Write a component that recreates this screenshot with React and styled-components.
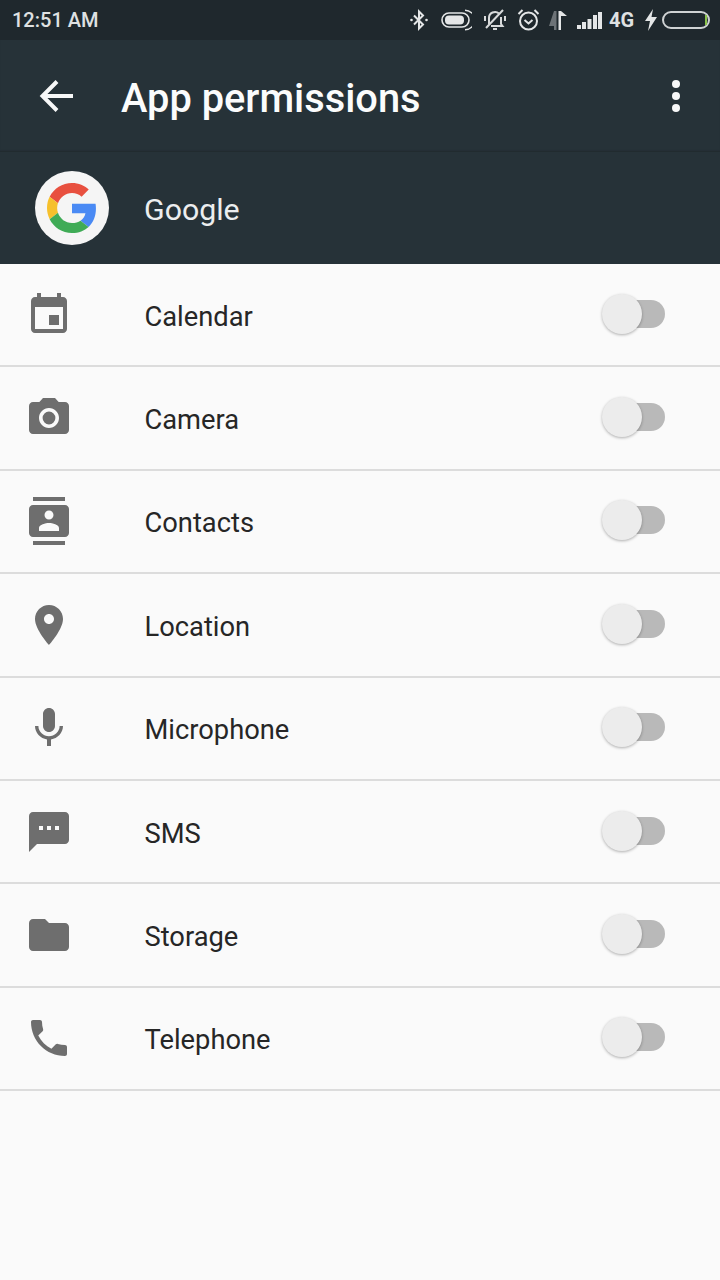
import styled, { createGlobalStyle } from "styled-components";

const GlobalStyle = createGlobalStyle`
  html, body {
    margin: 0;
    padding: 0;
    background: #fafafa;
  }
  body {
    font-family: Roboto, "Liberation Sans", sans-serif;
  }
`;

const permissions = [
  {
    name: "Calendar",
    icon: "M17 12h-5v5h5v-5zM16 1v2H8V1H6v2H5c-1.11 0-1.99.9-1.99 2L3 19c0 1.1.89 2 2 2h14c1.1 0 2-.9 2-2V5c0-1.1-.9-2-2-2h-1V1h-2zm3 18H5V8h14v11z",
  },
  {
    name: "Camera",
    icon: "M12 8.8a3.2 3.2 0 1 0 0 6.4 3.2 3.2 0 0 0 0-6.4zM9 2L7.17 4H4c-1.1 0-2 .9-2 2v12c0 1.1.9 2 2 2h16c1.1 0 2-.9 2-2V6c0-1.1-.9-2-2-2h-3.17L15 2H9zm3 15c-2.76 0-5-2.24-5-5s2.24-5 5-5 5 2.24 5 5-2.24 5-5 5z",
  },
  {
    name: "Contacts",
    icon: "M20 0H4v2h16V0zM4 24h16v-2H4v2zM20 4H4c-1.1 0-2 .9-2 2v12c0 1.1.9 2 2 2h16c1.1 0 2-.9 2-2V6c0-1.1-.9-2-2-2zm-8 2.75c1.24 0 2.25 1.01 2.25 2.25s-1.01 2.25-2.25 2.25S9.75 10.24 9.75 9 10.76 6.75 12 6.75zM17 17H7v-1.5c0-1.67 3.33-2.5 5-2.5s5 .83 5 2.5V17z",
  },
  {
    name: "Location",
    icon: "M12 2C8.13 2 5 5.13 5 9c0 5.25 7 13 7 13s7-7.75 7-13c0-3.87-3.13-7-7-7zm0 9.5c-1.38 0-2.5-1.12-2.5-2.5s1.12-2.5 2.5-2.5 2.5 1.12 2.5 2.5-1.12 2.5-2.5 2.5z",
  },
  {
    name: "Microphone",
    icon: "M12 14c1.66 0 2.99-1.34 2.99-3L15 5c0-1.66-1.34-3-3-3S9 3.34 9 5v6c0 1.66 1.34 3 3 3zm5.3-3c0 3-2.54 5.1-5.3 5.1S6.7 14 6.7 11H5c0 3.41 2.72 6.23 6 6.72V21h2v-3.28c3.28-.48 6-3.3 6-6.72h-1.7z",
  },
  {
    name: "SMS",
    icon: "M20 2H4c-1.1 0-1.99.9-1.99 2L2 22l4-4h14c1.1 0 2-.9 2-2V4c0-1.1-.9-2-2-2zM9 11H7V9h2v2zm4 0h-2V9h2v2zm4 0h-2V9h2v2z",
  },
  {
    name: "Storage",
    icon: "M10 4H4c-1.1 0-1.99.9-1.99 2L2 18c0 1.1.9 2 2 2h16c1.1 0 2-.9 2-2V8c0-1.1-.9-2-2-2h-8l-2-2z",
  },
  {
    name: "Telephone",
    icon: "M6.62 10.79c1.44 2.83 3.76 5.14 6.59 6.59l2.2-2.2c.27-.27.67-.36 1.02-.24 1.12.37 2.33.57 3.57.57.55 0 1 .45 1 1V20c0 .55-.45 1-1 1-9.39 0-17-7.61-17-17 0-.55.45-1 1-1h3.5c.55 0 1 .45 1 1 0 1.25.2 2.45.57 3.57.11.35.03.74-.25 1.02l-2.2 2.2z",
  },
];

const Page = styled.div`
  width: 720px;
  height: 1280px;
  overflow: hidden;
  background: #fafafa;
`;

const StatusBar = styled.div`
  height: 40px;
  padding: 0 10px 0 12px;
  box-sizing: border-box;
  display: flex;
  align-items: center;
  background: #1f282d;
  color: #dfe1e2;
`;

const Clock = styled.span`
  font-size: 20px;
  font-weight: 500;
  flex: 1;
`;

const StatusIcons = styled.div`
  display: flex;
  align-items: center;
`;

const Slot = styled.div`
  width: ${(p) => p.$w}px;
  display: flex;
  align-items: center;
`;

const NetworkLabel = styled.span`
  font-size: 20px;
  font-weight: 700;
`;

const Toolbar = styled.div`
  height: 112px;
  display: flex;
  align-items: center;
  padding: 0 40px 0 32px;
  box-sizing: border-box;
  background: #263238;
  box-shadow: inset 0 -2px 2px -1px #20292e;
`;

const Title = styled.h1`
  flex: 1;
  margin: 0 0 0 41px;
  padding-top: 4px;
  font-size: 39.8px;
  font-weight: 500;
  color: #fbfcfc;
`;

const AppBar = styled.div`
  height: 112px;
  display: flex;
  align-items: center;
  gap: 35px;
  padding: 0 0 0 35px;
  box-sizing: border-box;
  background: #263238;
`;

const LogoCircle = styled.div`
  width: 74px;
  height: 74px;
  border-radius: 50%;
  background: #f5f5f5;
  display: flex;
  align-items: center;
  justify-content: center;
`;

const AppName = styled.span`
  padding-top: 2px;
  font-size: 30.3px;
  color: #eceeef;
`;

const List = styled.div`
  display: grid;
  grid-auto-rows: 103.4px;
`;

const Row = styled.div`
  display: flex;
  align-items: center;
  padding: 0 55px 0 24.5px;
  box-sizing: border-box;
  border-bottom: 2px solid #dcdcdc;
`;

const RowIcon = styled.svg`
  width: 48px;
  height: 48px;
  fill: #6e6e6e;
  flex-shrink: 0;
`;

const Label = styled.span`
  flex: 1;
  margin-left: 72px;
  padding-top: 4px;
  font-size: 27.3px;
  color: #262626;
`;

const Toggle = styled.div`
  position: relative;
  width: 58px;
  height: 28px;
  margin-bottom: 2px;
  border-radius: 14px;
  background: #b9b9b9;
`;

const Thumb = styled.div`
  position: absolute;
  left: -5px;
  top: -6px;
  width: 40px;
  height: 40px;
  border-radius: 50%;
  background: #ececec;
  box-shadow: 0 1px 3px rgba(0, 0, 0, 0.3);
`;

const Battery = styled.div`
  position: relative;
  width: 48px;
  height: 18px;
  box-sizing: border-box;
  border: 2px solid #cfd2d3;
  border-radius: 9px;
`;

const BatteryLevel = styled.div`
  position: absolute;
  right: 1px;
  top: 2px;
  width: 2px;
  height: 10px;
  background: #8bc34a;
`;

const GoogleLogo = () => (
  <svg width="50" height="50" viewBox="0 0 48 48">
    <path fill="#E8503F" d="M24 9.5c3.54 0 6.71 1.22 9.21 3.6l6.85-6.85C35.9 2.38 30.47 0 24 0 14.62 0 6.51 5.38 2.56 13.22l7.98 6.19C12.43 13.72 17.74 9.5 24 9.5z" />
    <path fill="#4A8AF4" d="M46.98 24.55c0-1.57-.15-3.09-.38-4.55H24v9.02h12.94c-.58 2.96-2.26 5.48-4.78 7.18l7.73 6c4.51-4.18 7.09-10.36 7.09-17.65z" />
    <path fill="#F6C02C" d="M10.53 28.59c-.5-1.45-.79-2.99-.79-4.59s.27-3.14.76-4.59l-7.98-6.19C.92 16.46 0 20.12 0 24c0 3.88.92 7.54 2.56 10.78l7.97-6.19z" />
    <path fill="#3FAB56" d="M24 48c6.48 0 11.93-2.13 15.89-5.81l-7.73-6c-2.15 1.45-4.92 2.3-8.16 2.3-6.26 0-11.57-4.22-13.47-9.91l-7.98 6.19C6.51 42.62 14.62 48 24 48z" />
  </svg>
);

const StatusIconsRow = () => (
  <StatusIcons>
    <Slot $w={31}>
      {/* bluetooth */}
      <svg width="18" height="22" viewBox="0 0 18 22" fill="none" stroke="#e4e6e7" strokeWidth="2">
        <path d="M4 6.5l9 9L9 19.5V2.5l4 4-9 9" />
        <circle cx="1.5" cy="11" r="1.3" fill="#e4e6e7" stroke="none" />
        <circle cx="16.5" cy="11" r="1.3" fill="#e4e6e7" stroke="none" />
      </svg>
    </Slot>
    <Slot $w={42}>
      {/* data saver pill */}
      <svg width="31" height="22" viewBox="0 0 31 22" fill="none">
        <rect x="1" y="4" width="27" height="14" rx="7" stroke="#e4e6e7" strokeWidth="1.6" />
        <rect x="4" y="6.5" width="19" height="9" rx="4" fill="#e4e6e7" />
        <path d="M24 1.2a9.8 9.8 0 0 1 0 19.6" stroke="#e4e6e7" strokeWidth="1.4" />
      </svg>
    </Slot>
    <Slot $w={34}>
      {/* muted bell */}
      <svg width="24" height="24" viewBox="0 0 24 24" fill="none" stroke="#d8dadb" strokeWidth="2">
        <path d="M6 16V10a6 6 0 0 1 10-4.5M18 9v7l1.5 2H8" />
        <path d="M10 21h4" />
        <path d="M3 20L20 2" />
        <path d="M2 8v5M22 8v5" />
      </svg>
    </Slot>
    <Slot $w={31}>
      {/* alarm */}
      <svg width="23" height="24" viewBox="0 0 23 24" fill="none" stroke="#e4e6e7" strokeWidth="2">
        <circle cx="11.5" cy="13" r="8.5" />
        <path d="M7.5 12l4 3.5 4-3.5M1.5 6l4-4M21.5 6l-4-4" />
      </svg>
    </Slot>
    <Slot $w={29}>
      {/* up/down arrows */}
      <svg width="19" height="24" viewBox="0 0 19 24">
        <path fill="#6d7377" d="M6 3h2.5v19H6v-4H1z" />
        <path fill="#e4e6e7" d="M10.5 3H13l6 5h-6v14h-2.5z" />
      </svg>
    </Slot>
    <Slot $w={32}>
      {/* signal */}
      <svg width="25" height="20" viewBox="0 0 25 20" fill="#e4e6e7">
        <path d="M0 15h4v4H0zM5 12h4v7H5zM10.5 9h4v10h-4zM16 5h4v14h-4zM21 2h4v17h-4z" />
      </svg>
    </Slot>
    <Slot $w={36}>
      <NetworkLabel>4G</NetworkLabel>
    </Slot>
    <Slot $w={17}>
      <svg width="12" height="22" viewBox="0 0 12 22" fill="#e4e6e7">
        <path d="M8 0L0 12h5l-2 10 9-14H6.5z" />
      </svg>
    </Slot>
    <Battery>
      <BatteryLevel />
    </Battery>
  </StatusIcons>
);

const App = () => {
  return (
    <Page>
      <GlobalStyle />
      <StatusBar>
        <Clock>12:51 AM</Clock>
        <StatusIconsRow />
      </StatusBar>
      <Toolbar>
        <svg width="48" height="48" viewBox="0 0 48 48" fill="none" stroke="#f7f8f8" strokeWidth="4">
          <path d="M41 24H11M25 9.5L10.5 24 25 38.5" />
        </svg>
        <Title>App permissions</Title>
        <svg width="8" height="32" viewBox="0 0 8 32" fill="#f7f8f8">
          <circle cx="4" cy="4" r="4" />
          <circle cx="4" cy="16" r="4" />
          <circle cx="4" cy="28" r="4" />
        </svg>
      </Toolbar>
      <AppBar>
        <LogoCircle>
          <GoogleLogo />
        </LogoCircle>
        <AppName>Google</AppName>
      </AppBar>
      <List>
        {permissions.map((p) => (
          <Row key={p.name}>
            <RowIcon viewBox="0 0 24 24">
              <path d={p.icon} />
            </RowIcon>
            <Label>{p.name}</Label>
            <Toggle>
              <Thumb />
            </Toggle>
          </Row>
        ))}
      </List>
    </Page>
  );
};

export default App;
